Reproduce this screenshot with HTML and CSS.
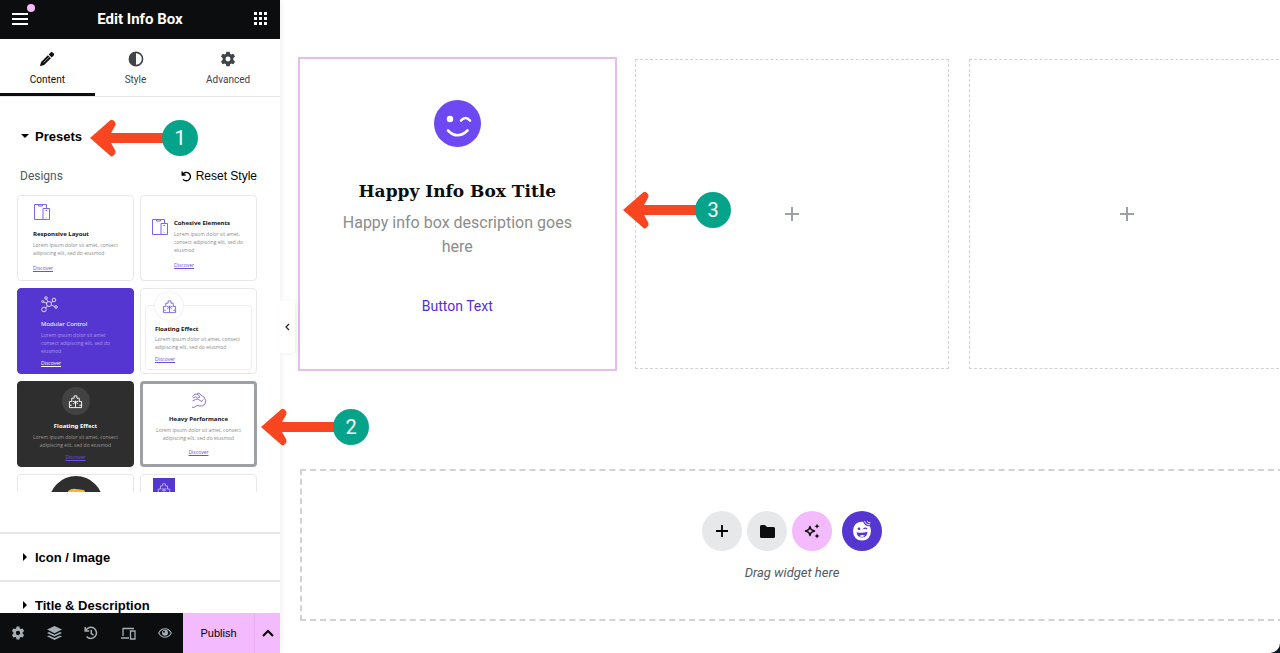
FILE: index.html
```
<!DOCTYPE html>
<html lang="en">

<head>
  <meta charset="UTF-8">
  <meta name="viewport" content="width=device-width, initial-scale=1.0">
  <title>Edit Info Box</title>
  <link rel="stylesheet" href="styles.css">
</head>

<body>
  <!-- shared icons -->
  <svg class="sprite" aria-hidden="true">
    <symbol id="gear" viewBox="0 0 24 24">
      <path fill-rule="evenodd" d="M9.500 1h5l.6 3.200 1.800 1 3.100-1.100 2.500 4.300-2.500 2.100v3l2.500 2.100-2.500 4.300-3.100-1.100-1.800 1-.6 3.200h-5l-.6-3.200-1.800-1L4 19.900 1.500 15.600 4 13.500v-3L1.500 8.400 4 4.100l3.100 1.100 1.800-1zM12 8.300a3.700 3.700 0 1 0 0 7.400 3.700 3.700 0 0 0 0-7.400z" />
    </symbol>
    <symbol id="devices" viewBox="0 0 18 18">
      <path d="M10 16.500H1.500V1.500h12V5M5.500 1.500v1.500h4V1.500M10 5.500h6.500v11H10zM12.500 7.500h1.500M13.200 14v.6" fill="none" stroke="currentColor" />
    </symbol>
    <symbol id="blocks" viewBox="0 0 16 16">
      <path d="M1.500 14.500V8H4V4.500h2.500V2h3v2.500H12V8h2.500v6.500zM5 8h2M9 8h2M8 7v7M5.500 10.500 8 8.500l2.500 2M1.500 12H4M12 12h2.500" fill="none" stroke="currentColor" />
    </symbol>
    <symbol id="arrow" viewBox="0 0 80 38">
      <path d="M0 19 20 1.500Q22-.5 25 3q1 2 0 4l-4 7h59v10H21l4 7q1 2 0 4-3 4-5 1.500z" />
    </symbol>
  </svg>

  <aside class="panel">
    <header class="panel-header">
      <button class="icon-btn" aria-label="Menu">
        <svg width="16" height="12" viewBox="0 0 16 12"><path d="M0 1h16M0 6h16M0 11h16" stroke="#fff" stroke-width="2" /></svg>
        <span class="dot"></span>
      </button>
      <h1>Edit Info Box</h1>
      <button class="icon-btn" aria-label="Widgets">
        <svg width="13" height="13" viewBox="0 0 13 13"><path d="M0 0h3v3H0zM5 0h3v3H5zM10 0h3v3h-3zM0 5h3v3H0zM5 5h3v3H5zM10 5h3v3h-3zM0 10h3v3H0zM5 10h3v3H5zM10 10h3v3h-3z" /></svg>
      </button>
    </header>

    <nav class="tabs">
      <button class="tab active">
        <svg width="16" height="16" viewBox="0 0 16 16"><path d="m9.700 3.500 2.200-2.200q.8-.7 1.700.1l1.200 1.200q.8.900.1 1.700l-2.200 2.200zM8.900 4.300l3 3-6.800 6.800-3.600 1q-.5 0-.4-.5l1-3.500z" /><path d="m4.600 11.600 5.600-5.600" stroke="#fff" stroke-width=".6" /></svg>
        Content
      </button>
      <button class="tab">
        <svg width="16" height="16" viewBox="0 0 16 16"><circle cx="8" cy="8" r="6.600" fill="none" stroke="currentColor" stroke-width="1.600" /><path d="M8 1a7 7 0 0 0 0 14z" /></svg>
        Style
      </button>
      <button class="tab">
        <svg width="16" height="16"><use href="#gear" /></svg>
        Advanced
      </button>
    </nav>

    <div class="panel-body">
      <button class="section-title open">Presets</button>
      <div class="presets">
        <div class="presets-head">
          <span>Designs</span>
          <button class="reset">
            <svg width="11" height="11" viewBox="0 0 11 11"><path d="M1.200.5v3.500h3.500M1.500 3.700a4.200 4.200 0 1 1 .6 4.700" fill="none" stroke="currentColor" stroke-width="1.400" /></svg>
            Reset Style
          </button>
        </div>

        <div class="designs">
          <button class="design">
            <svg class="pic" width="18" height="18"><use href="#devices" /></svg>
            <b>Responsive Layout</b>
            <span>Lorem ipsum dolor sit amet, consect adipiscing elit, sed do eiusmod</span>
            <i>Discover</i>
          </button>
          <button class="design side">
            <svg class="pic" width="18" height="18"><use href="#devices" /></svg>
            <div>
              <b>Cohesive Elements</b>
              <span>Lorem ipsum dolor sit amet, consect adipiscing elit, sed do eiusmod</span>
              <i>Discover</i>
            </div>
          </button>
          <button class="design purple">
            <svg class="pic line" width="17" height="17" viewBox="0 0 17 17" stroke-width=".8"><circle cx="8" cy="8" r="2.500" /><circle cx="3" cy="13.500" r="2.300" /><circle cx="13" cy="4" r="1.800" /><circle cx="5" cy="2" r="1.300" /><circle cx="15" cy="11" r="1.300" /><circle cx="1.700" cy="5.500" r="1" /><path d="m4.500 12 2-2M10 6.500l1.700-1.300M5.500 3.200l1.500 2.500M10.400 9l3.400 1.500M2.700 6l3 1.300" /></svg>
            <b>Modular Control</b>
            <span>Lorem ipsum dolor sit amet consect adipiscing elit, sed do eiusmod</span>
            <i>Discover</i>
          </button>
          <button class="design framed">
            <div class="frame">
              <div class="round"><svg class="pic" width="15" height="15"><use href="#blocks" /></svg></div>
              <b>Floating Effect</b>
              <span>Lorem ipsum dolor sit amet, consect adipiscing elit, sed do eiusmod</span>
              <i>Discover</i>
            </div>
          </button>
          <button class="design dark">
            <div class="round"><svg class="pic" width="15" height="15"><use href="#blocks" /></svg></div>
            <b>Floating Effect</b>
            <span>Lorem ipsum dolor sit amet, consect adipiscing elit, sed do eiusmod</span>
            <i>Discover</i>
          </button>
          <button class="design selected">
            <svg class="pic line" width="17" height="17" viewBox="0 0 17 17" stroke-width=".9"><path d="M2.500 4.500 5 2l3 .5L10 5l-2.500 1-2-1.200L3 6M7 2l2-1 2 2 3 2q3 4 1 7-2 2.500-5 2l-3-.5-3 2-2-.5M2.500 9l3-1.500Q8 6 10 8.500t3-1" /></svg>
            <b>Heavy Performance</b>
            <span>Lorem ipsum dolor sit amet, consect adipiscing elit, sed do eiusmod</span>
            <i>Discover</i>
          </button>
          <button class="design photo" aria-label="Photo design">
            <svg width="54" height="54" viewBox="0 0 54 54"><circle cx="27" cy="27" r="27" fill="#2e2e2e" /><path d="M19 15q4-3 8-2l8 1q3 4-1 6H19z" fill="#f7b731" /></svg>
          </button>
          <button class="design square" aria-label="Square icon design">
            <div class="tile"><svg width="14" height="14"><use href="#blocks" /></svg></div>
          </button>
        </div>
      </div>
      <button class="section-title">Icon / Image</button>
      <button class="section-title">Title &amp; Description</button>
    </div>

    <footer class="panel-footer">
      <div class="tools">
        <button aria-label="Settings"><svg width="14" height="14"><use href="#gear" /></svg></button>
        <button aria-label="Structure"><svg width="15" height="14" viewBox="0 0 15 14"><path d="M7.500 0 15 3.600 7.500 7.200 0 3.600zM1.900 6 0 6.900l7.500 3.600L15 6.900 13.100 6 7.500 8.700zM1.900 9.400 0 10.300l7.500 3.600 7.500-3.600-1.900-.9-5.600 2.700z" /></svg></button>
        <button aria-label="History"><svg class="line" width="14" height="14" viewBox="0 0 14 14" stroke-width="1.500"><path d="M1.800 4.500a5.600 5.600 0 1 1 .8 6M1.200 1v4h4M7.300 3.800V7.500l2.200 1.600" /></svg></button>
        <button aria-label="Responsive mode"><svg class="line" width="15" height="13" viewBox="0 0 15 13" stroke-width="1.300"><path d="M2 9V1.500h11M0 11h8M9.500 4h4.500v8H9.500z" /></svg></button>
        <button aria-label="Preview"><svg width="14" height="10" viewBox="0 0 14 10"><path d="M.7 5Q3 .8 7 .8T13.300 5Q11 9.200 7 9.200T.7 5z" fill="none" stroke="currentColor" stroke-width="1.100" /><circle cx="7" cy="4.800" r="3" /><circle cx="6" cy="3.800" r="1" fill="#0c0d0e" /></svg></button>
      </div>
      <button class="publish">Publish</button>
      <button class="more" aria-label="Save options"><svg width="12" height="8" viewBox="0 0 12 8"><path d="m1 7 5-5 5 5" fill="none" stroke="#000" stroke-width="2" /></svg></button>
    </footer>

    <button class="collapse" aria-label="Hide panel"><svg width="5" height="8" viewBox="0 0 5 8"><path d="M4 1 1 4l3 3" fill="none" stroke="#222" stroke-width="1.200" /></svg></button>
  </aside>

  <main class="preview">
    <div class="columns">
      <section class="column info-box">
        <svg width="47" height="47" viewBox="0 0 47 47"><circle cx="23.500" cy="23.500" r="23.500" fill="#6e48f2" /><circle cx="16" cy="19" r="3.200" fill="#fff" /><path d="M27 20.500q4.500-5 9 0M14 30.500q9.500 9.500 19.500 0" fill="none" stroke="#fff" stroke-width="2.600" stroke-linecap="round" /></svg>
        <h2>Happy Info Box Title</h2>
        <p>Happy info box description goes here</p>
        <a href="#">Button Text</a>
      </section>
      <button class="column empty" aria-label="Add widget"><svg width="14" height="14" viewBox="0 0 14 14"><path d="M7 0v14M0 7h14" stroke="#9da1a5" stroke-width="2" /></svg></button>
      <button class="column empty" aria-label="Add widget"><svg width="14" height="14" viewBox="0 0 14 14"><path d="M7 0v14M0 7h14" stroke="#9da1a5" stroke-width="2" /></svg></button>
    </div>

    <section class="drop-zone">
      <div class="circles">
        <button class="circle" aria-label="Add container"><svg width="12" height="12" viewBox="0 0 12 12"><path d="M6 0v12M0 6h12" stroke="#000" stroke-width="1.800" /></svg></button>
        <button class="circle" aria-label="Templates"><svg width="15" height="13" viewBox="0 0 15 13"><path d="M1.500 0H5l2 2h6.500Q15 2 15 3.500v8q0 1.500-1.500 1.500h-12Q0 13 0 11.500v-10Q0 0 1.500 0z" /></svg></button>
        <button class="circle pink" aria-label="Build with AI"><svg width="16" height="16" viewBox="0 0 16 16"><path d="m6 3.500 1.300 3.200L10.500 8 7.300 9.300 6 12.500 4.700 9.300 1.500 8l3.200-1.300z" fill="none" stroke="#000" stroke-width="1.400" stroke-linejoin="round" /><path d="m13 .8.800 1.700 1.700.8-1.700.8-.8 1.700-.8-1.700-1.700-.8 1.700-.8zM13 10.500l.8 1.700 1.700.8-1.700.8-.8 1.700-.8-1.700-1.700-.8 1.700-.8z" /></svg></button>
        <button class="circle happy" aria-label="Happy Addons"><svg width="20" height="20" viewBox="0 0 20 20"><path d="M11 .8Q1.500.5 1 10q.5 9.500 9 9.500t9-9.500q0-3-1.200-4.800-4.300.8-6.800-4.400z" fill="#fff" /><path d="M12.500.2q1.500 3.800 5.500 3.500M15 .2q1 1.800 3.500 1.600" fill="none" stroke="#fff" stroke-width=".9" /><circle cx="7" cy="7.800" r="1.400" fill="#5636d1" /><path d="M11.500 8q1.800-1.700 3.500 0" fill="none" stroke="#5636d1" stroke-width="1.200" /><path d="M4.500 11.200q5.500 1.200 11-.4-.5 5.400-5.200 5.700-4.800 0-5.800-5.300z" fill="#5636d1" /><path d="M7.500 15q2.700-2 5.500-.2-2.800 2.200-5.500.2z" fill="#fff" /></svg></button>
      </div>
      <p>Drag widget here</p>
    </section>
  </main>

  <!-- step callouts -->
  <div class="step step-1"><svg width="80" height="38"><use href="#arrow" /></svg><span>1</span></div>
  <div class="step step-2"><svg width="80" height="38"><use href="#arrow" /></svg><span>2</span></div>
  <div class="step step-3"><svg width="80" height="38"><use href="#arrow" /></svg><span>3</span></div>
</body>

</html>
```
FILE: styles.css
```
* {
  box-sizing: border-box;
}

body {
  margin: 0;
  display: flex;
  height: 100vh;
  overflow: hidden;
  position: relative;
  background: #06182b;
  font-family: Roboto, sans-serif;
  font-size: 12px;
  color: #0c0d0e;
}

button {
  border: 0;
  padding: 0;
  background: none;
  font: inherit;
  color: inherit;
  cursor: pointer;
}

svg {
  display: block;
  flex: none;
  fill: currentColor;
}

svg.line {
  fill: none;
  stroke: currentColor;
}

h1, h2, p {
  margin: 0;
}

.sprite {
  position: absolute;
  width: 0;
  height: 0;
}

/* left panel */
.panel {
  position: relative;
  z-index: 1;
  flex: 0 0 280px;
  display: flex;
  flex-direction: column;
  background: #fff;
  box-shadow: 0 0 8px rgba(0, 0, 0, 0.08);
}

.panel-header {
  flex: none;
  height: 39px;
  padding: 0 12px 2px;
  display: flex;
  align-items: center;
  justify-content: space-between;
  background: #0c0d0e;
  color: #fff;
}

.panel-header h1 {
  font-size: 15px;
  font-weight: 700;
}

.icon-btn {
  position: relative;
  width: 16px;
  display: flex;
  justify-content: center;
}

.dot {
  position: absolute;
  top: -9px;
  right: -7px;
  width: 8px;
  height: 8px;
  border-radius: 50%;
  background: #f3bafd;
}

.tabs {
  flex: none;
  height: 58px;
  display: flex;
  border-bottom: 1px solid #e6e8ea;
}

.tab {
  flex: 1 1 auto;
  display: flex;
  flex-direction: column;
  align-items: center;
  gap: 6px;
  padding-top: 12px;
  font-size: 10px;
  line-height: 13px;
  color: #3f444b;
}

.tab.active {
  color: #0c0d0e;
  border-bottom: 3px solid #0c0d0e;
}

.panel-body {
  flex: 1;
  min-height: 0;
  overflow: hidden;
  padding-top: 15px;
}

.section-title {
  display: flex;
  align-items: center;
  gap: 8px;
  width: 100%;
  height: 48px;
  padding: 0 23px;
  border-top: 2px solid #e6e8ea;
  font-family: "Liberation Sans", sans-serif;
  font-size: 13px;
  font-weight: 700;
  color: #000;
}

.section-title::before {
  content: "";
  border: solid transparent;
  border-width: 4px 0 4px 4px;
  border-left-color: #000;
}

.section-title.open {
  border-top: 0;
  padding: 0 21px;
  gap: 6px;
}

.section-title.open::before {
  border-width: 4px 4px 0;
  border-color: #000 transparent;
}

.presets {
  padding: 8px 23px 40px 17px;
}

.presets-head {
  display: flex;
  justify-content: space-between;
  align-items: center;
  height: 16px;
  padding-left: 3px;
  margin-bottom: 11px;
  color: #515962;
}

.reset {
  display: flex;
  align-items: center;
  gap: 4px;
  font-family: "Liberation Sans", sans-serif;
  color: #000;
}

.designs {
  display: grid;
  grid-template-columns: 1fr 1fr;
  grid-auto-rows: 86px;
  gap: 7px 6px;
  height: 297px;
  overflow: hidden;
}

/* preset thumbnails */
.design {
  display: flex;
  flex-direction: column;
  min-width: 0;
  padding: 7px 12px 0 15px;
  overflow: hidden;
  border: 1px solid #e6e8ea;
  border-radius: 4px;
  text-align: left;
  font-family: "Open Sans", sans-serif;
  font-size: 5px;
  line-height: 8px;
  color: #8a8a8a;
}

.design b,
.design span,
.design i {
  display: block;
}

.design b {
  margin: 9px 0 3px;
  font-family: "Noto Sans", sans-serif;
  font-size: 6px;
  color: #111;
}

.design i {
  margin-top: 7px;
  font-style: normal;
  text-decoration: underline;
  color: #6a4fe0;
}

.pic {
  color: #7b66e8;
}

.design.side {
  flex-direction: row;
  gap: 5px;
  padding: 22px 6px 0 10px;
}

.design.side b {
  margin-top: 1px;
}

.design.purple {
  padding: 7px 18px 0 23px;
  border-color: #5636d1;
  background: #5636d1;
  color: #a996f2;
}

.design.purple b {
  margin-top: 7px;
  font-weight: 400;
}

.design.purple b,
.design.purple i,
.design.purple .pic {
  color: #fff;
}

.design.purple i {
  margin-top: 4px;
}

.round {
  display: flex;
  align-items: center;
  justify-content: center;
  flex: none;
  width: 28px;
  height: 28px;
  border-radius: 50%;
}

.design.framed {
  padding: 16px 4px 3px;
}

.frame {
  flex: 1;
  padding: 0 9px;
  border: 1px solid #eceef0;
  border-radius: 4px;
}

.frame .round {
  margin-top: -14px;
  background: #fff;
  box-shadow: 0 0 2px rgba(0, 0, 0, 0.15);
}

.frame b {
  margin: 5px 0 2px;
}

.frame i {
  margin-top: 4px;
}

.design.dark {
  align-items: center;
  padding: 5px 12px 0;
  border-color: #2e2e2e;
  background: #2e2e2e;
  text-align: center;
  color: #9a9a9a;
}

.dark .round {
  background: #424242;
}

.dark b {
  margin: 7px 0 3px;
}

.dark b,
.dark .pic {
  color: #fff;
}

.dark i {
  margin-top: 4px;
}

.design.selected {
  align-items: center;
  padding: 8px 10px 0;
  border: 3px solid #9da1a5;
  text-align: center;
}

.selected b {
  margin: 6px 0 3px;
}

.selected i {
  margin-top: 6px;
}

.design.photo {
  align-items: center;
  padding: 1px 0 0;
}

.design.square {
  padding: 3px 12px;
}

.tile {
  display: flex;
  align-items: center;
  justify-content: center;
  width: 22px;
  height: 22px;
  background: #5636d1;
  color: #c5b8ff;
}

.panel-footer {
  flex: none;
  display: flex;
  height: 40px;
  background: #0c0d0e;
}

.tools {
  flex: 1;
  display: flex;
  color: #a4afb7;
}

.tools button {
  flex: 1;
  display: flex;
  align-items: center;
  justify-content: center;
}

.publish {
  width: 71px;
  background: #f3bafd;
  font-family: "Liberation Sans", sans-serif;
  font-size: 11px;
  color: #000;
}

.more {
  display: flex;
  align-items: center;
  justify-content: center;
  width: 26px;
  background: #f3bafd;
  border-left: 1px solid #ebadf6;
}

.collapse {
  position: absolute;
  left: 100%;
  top: 50%;
  margin-top: -26px;
  width: 15px;
  height: 52px;
  display: flex;
  align-items: center;
  justify-content: center;
  background: #fff;
  border-radius: 0 3px 3px 0;
  box-shadow: 3px 1px 5px rgba(0, 0, 0, 0.06);
}

/* page canvas, runs a little past the right edge */
.preview {
  flex: 1;
  min-width: 0;
  overflow: hidden;
  padding: 59px 0 0 20px;
  background: #fff;
  border-bottom-right-radius: 10px;
}

.columns {
  display: grid;
  grid-template-columns: repeat(3, 1fr);
  gap: 20px;
  margin-right: -4px;
}

.column {
  min-height: 310px;
}

.info-box {
  display: flex;
  flex-direction: column;
  align-items: center;
  padding: 41px 30px 40px;
  outline: 2px solid #e5bdeb;
  text-align: center;
}

.info-box h2 {
  margin: 32px 0 8px;
  font-family: "Roboto Slab", "DejaVu Serif", serif;
  font-size: 17px;
  line-height: 24px;
  white-space: nowrap;
}

.info-box p {
  font-size: 16px;
  line-height: 24px;
  color: #8c8c8c;
}

.info-box a {
  margin-top: 38px;
  font-size: 14px;
  line-height: 18px;
  text-decoration: none;
  color: #562dd4;
}

.empty {
  display: flex;
  align-items: center;
  justify-content: center;
  border: 1px dashed #d0d3d6;
}

.drop-zone {
  display: flex;
  flex-direction: column;
  align-items: center;
  gap: 14px;
  height: 152px;
  margin: 100px -4px 0 0;
  padding-top: 40px;
  border: 2px dashed #d0d3d6;
}

.circles {
  display: flex;
  gap: 5px;
}

.circle {
  display: flex;
  align-items: center;
  justify-content: center;
  width: 40px;
  height: 40px;
  border-radius: 50%;
  background: #e6e8ea;
}

.circle.pink {
  background: #f3bafd;
}

.circle.happy {
  margin-left: 5px;
  background: #5636d1;
}

.drop-zone p {
  font-size: 13px;
  line-height: 16px;
  font-style: italic;
  color: #515962;
}

/* callouts over the page */
.step {
  position: absolute;
  z-index: 2;
  display: flex;
  align-items: center;
  color: #f94620;
}

.step span {
  width: 36px;
  margin-left: -8px;
  border-radius: 50%;
  background: #06a38b;
  color: #fff;
  font-size: 20px;
  line-height: 36px;
  text-align: center;
}

.step-1 {
  left: 90px;
  top: 119px;
}

.step-2 {
  left: 261px;
  top: 408px;
}

.step-3 {
  left: 623px;
  top: 191px;
}
```
